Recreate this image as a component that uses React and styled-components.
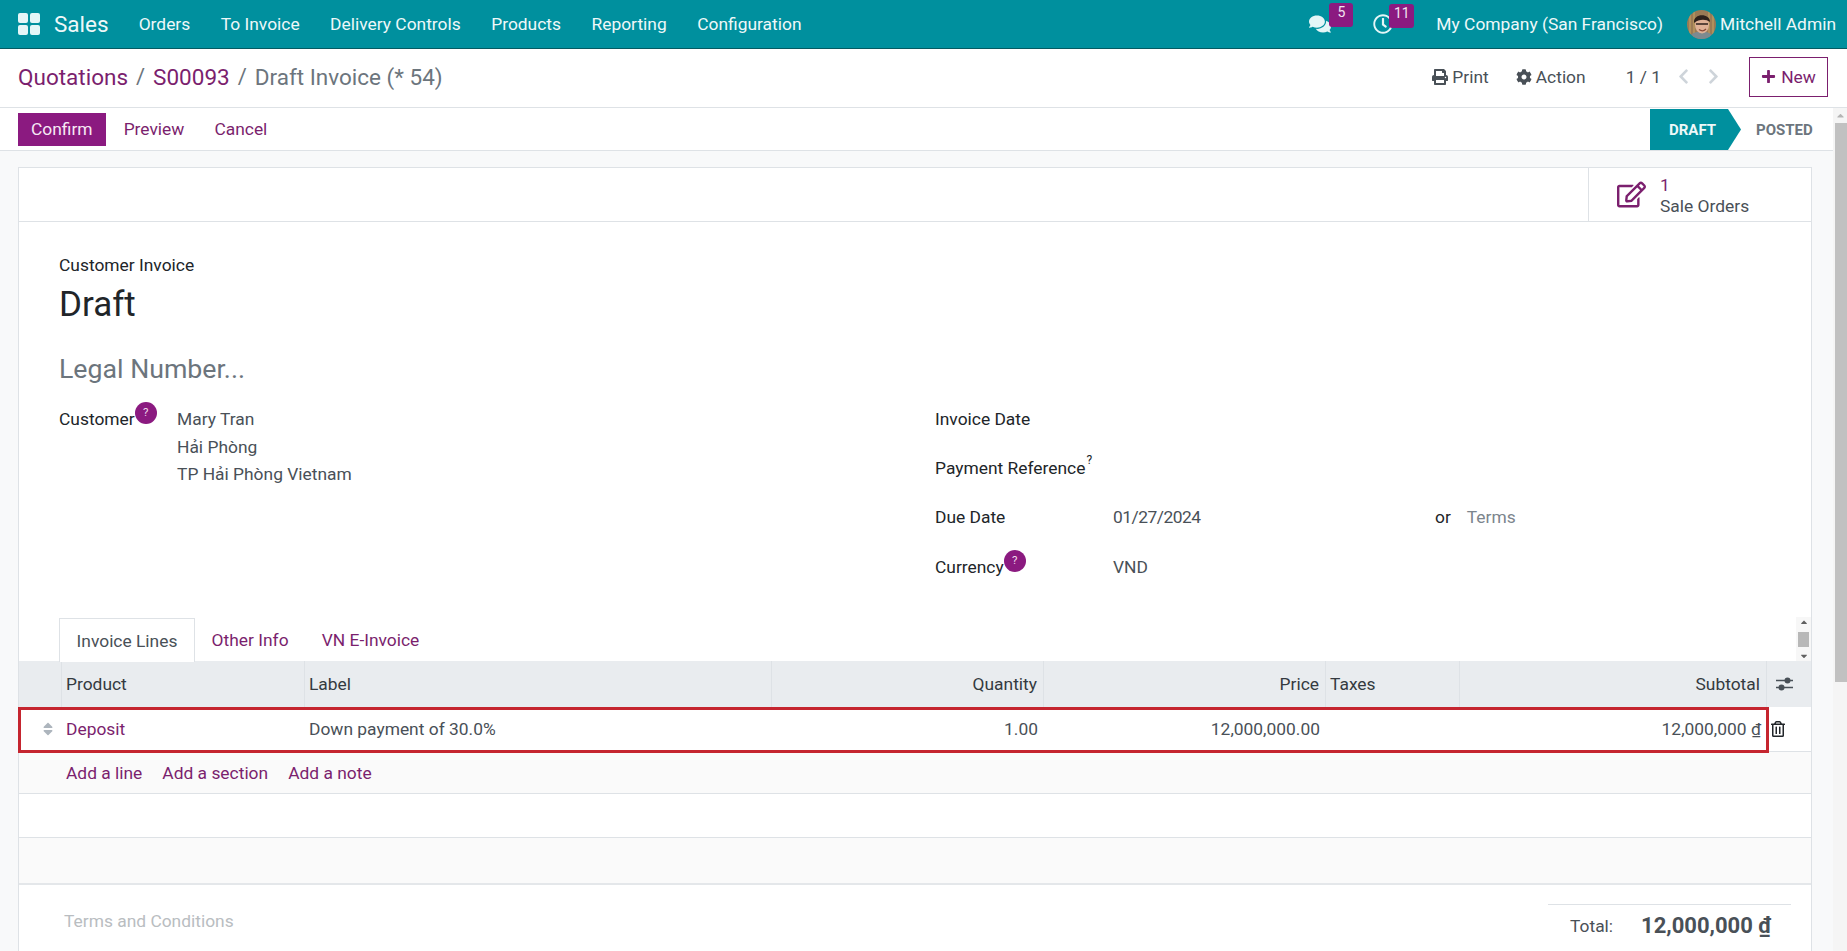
import React from 'react'
import styled, { createGlobalStyle } from 'styled-components'
import {
  FaComments,
  FaRegClock,
  FaPrint,
  FaCog,
  FaPlus,
  FaChevronLeft,
  FaChevronRight,
  FaRegEdit,
  FaRegTrashAlt,
  FaSort,
  FaCaretUp,
  FaCaretDown,
} from 'react-icons/fa'

const GlobalStyle = createGlobalStyle`
  * {
    box-sizing: border-box;
  }

  html,
  body {
    margin: 0;
    padding: 0;
    width: 100%;
    height: 100%;
    overflow: hidden;
    font-family: Roboto, 'Noto Sans', sans-serif;
    font-size: 17.4px;
    color: #212529;
    background: #ffffff;
  }
`

const purple = '#7b1f6e'
const button = '#8b1a80'
const columns = '43px 243px 467px 272px 282px 134px 307px 46px'

const Page = styled.div`
  width: 1847px;
  height: 951px;
  display: flex;
  flex-direction: column;
  overflow: hidden;
`

const Topbar = styled.header`
  height: 49px;
  flex-shrink: 0;
  display: flex;
  align-items: center;
  padding: 0 11px 0 18px;
  background: #00909e;
  border-bottom: 1px solid #055a62;
  color: #eef8f9;
`

const AppGrid = styled.span`
  display: grid;
  grid-template-columns: 10px 10px;
  grid-auto-rows: 10px;
  gap: 2px;
  margin-right: 14px;

  i {
    display: block;
    border-radius: 2px;
    background: #e4f6f7;
  }
`

const Brand = styled.span`
  font-size: 22.5px;
  margin-right: 30px;
`

const NavItem = styled.span`
  margin-right: 30.5px;
`

const Spacer = styled.span`
  flex: 1;
`

const Systray = styled.span`
  position: relative;
  display: flex;
  align-items: center;
  width: ${props => props.$width}px;
  font-size: ${props => props.$size}px;
  color: #e4f6f7;
`

const Badge = styled.span`
  position: absolute;
  left: ${props => props.$left}px;
  top: -10px;
  min-width: ${props => props.$wide}px;
  height: 24px;
  padding: 0 4px;
  border-radius: 3px;
  background: ${button};
  color: #f2e3f0;
  font-size: 14px;
  line-height: 18px;
  text-align: center;
`

const Company = styled.span`
  margin-right: 24px;
`

const Avatar = styled.svg`
  width: 29px;
  height: 29px;
  margin-right: 4px;
  border-radius: 50%;
`

const ControlPanel = styled.div`
  height: 59px;
  flex-shrink: 0;
  display: flex;
  align-items: center;
  padding: 0 19px 3px 18px;
  border-bottom: 1px solid #dee2e6;
  background: #ffffff;
`

const Crumb = styled.span`
  font-size: 22.5px;
  color: ${props => (props.$current ? '#6c757d' : purple)};
`

const CrumbSep = styled.span`
  font-size: 22px;
  color: #6c757d;
  margin: 0 8px;
`

const PanelAction = styled.span`
  display: inline-flex;
  align-items: center;
  gap: 4px;
  color: #495057;
  margin-right: ${props => props.$gap}px;

  svg {
    font-size: 16px;
  }
`

const Pager = styled.span`
  color: #495057;
  margin-right: 14px;
`

const PagerArrow = styled.span`
  display: inline-flex;
  color: #ced4da;
  font-size: 17px;
  margin-right: ${props => props.$gap}px;
`

const NewButton = styled.span`
  display: inline-flex;
  align-items: center;
  gap: 5px;
  height: 40px;
  width: 79px;
  justify-content: center;
  border: 1px solid ${purple};
  color: ${purple};

  svg {
    font-size: 15px;
  }
`

const Body = styled.div`
  flex: 1;
  display: flex;
  min-height: 0;
`

const Main = styled.div`
  flex: 1;
  min-width: 0;
  display: flex;
  flex-direction: column;
  background: #f8f9fa;
`

const ScrollTrack = styled.div`
  position: relative;
  width: 14px;
  flex-shrink: 0;
  background: #f5f5f5;
  padding-top: 15px;

  svg {
    position: absolute;
    top: 2px;
    left: 2px;
    font-size: 11px;
    color: #b5b5b5;
  }
`

const ScrollThumb = styled.div`
  width: 12px;
  margin-left: 2px;
  height: 559px;
  background: #c1c1c1;
`

const StatusBar = styled.div`
  height: 43px;
  flex-shrink: 0;
  display: flex;
  align-items: flex-start;
  justify-content: space-between;
  padding: 5px 0 0 18px;
  background: #ffffff;
  border-bottom: 1px solid #dee2e6;
`

const ActionButtons = styled.div`
  display: flex;
  align-items: center;
`

const ActionButton = styled.span`
  height: 33px;
  display: flex;
  align-items: center;
  padding: 0 ${props => (props.$primary ? 13 : 15)}px 2px;
  margin-right: ${props => (props.$primary ? 3 : 0)}px;
  background: ${props => (props.$primary ? button : 'transparent')};
  color: ${props => (props.$primary ? '#f6e9f4' : purple)};
`

const Stages = styled.div`
  display: flex;
  margin-top: -4px;
`

const StageActive = styled.span`
  width: 91px;
  height: 41px;
  display: flex;
  align-items: center;
  padding-left: 19px;
  background: #00909e;
  color: #eef8f9;
  font-size: 15px;
  font-weight: 700;
  clip-path: polygon(0 0, 78px 0, 100% 50%, 78px 100%, 0 100%);
`

const StageNext = styled.span`
  width: 92px;
  height: 41px;
  display: flex;
  align-items: center;
  padding-left: 15px;
  color: #6c757d;
  font-size: 15px;
  font-weight: 700;
`

const Content = styled.div`
  flex: 1;
  min-height: 0;
  padding: 16px 21px 0 18px;
`

const Sheet = styled.div`
  position: relative;
  height: 100%;
  background: #ffffff;
  border: 1px solid #dee2e6;
  border-bottom: 0;
  display: flex;
  flex-direction: column;
`

const ButtonBox = styled.div`
  height: 54px;
  flex-shrink: 0;
  display: flex;
  justify-content: flex-end;
  border-bottom: 1px solid #dee2e6;
`

const StatButton = styled.div`
  width: 223px;
  display: flex;
  align-items: center;
  gap: 14px;
  padding-left: 28px;
  border-left: 1px solid #dee2e6;
  color: ${purple};

  svg {
    font-size: 29px;
  }
`

const StatText = styled.div`
  display: flex;
  flex-direction: column;
  line-height: 20.5px;
  margin-top: 2px;

  span + span {
    color: #495057;
  }
`

const FormTop = styled.div`
  padding: 31px 40px 0 40px;
  height: 395px;
  flex-shrink: 0;
`

const DocType = styled.div`
  height: 24px;
  line-height: 24px;
  color: #212529;
`

const DocTitle = styled.h1`
  margin: 5px 0 0;
  font-size: 35px;
  line-height: 46px;
  font-weight: 400;
  color: #212529;
`

const LegalNumber = styled.div`
  margin-top: 23px;
  font-size: 26.700px;
  line-height: 36px;
  color: #6c757d;
`

const FormGroups = styled.div`
  margin-top: 20px;
  display: grid;
  grid-template-columns: 876px 1fr;
`

const LeftGroup = styled.div`
  display: grid;
  grid-template-columns: 118px 1fr;
`

const RightGroup = styled.div`
  display: grid;
  grid-template-columns: 178px 322px 1fr;
  grid-auto-rows: 49.200px;
  line-height: 24px;
`

const FieldLabel = styled.span`
  position: relative;
  height: 24px;
  line-height: 24px;
  white-space: nowrap;
  color: #212529;
`

const HelpBubble = styled.span`
  position: absolute;
  top: -5px;
  width: 22px;
  height: 22px;
  border-radius: 50%;
  background: ${button};
  color: #f0dcec;
  font-size: 11.500px;
  line-height: 21px;
  text-align: center;
`

const Sup = styled.sup`
  position: absolute;
  top: -4px;
  font-size: 12px;
  line-height: 16px;
  margin-left: 1px;
`

const Address = styled.div`
  display: flex;
  flex-direction: column;
  color: #495057;

  span {
    height: 27.500px;
    line-height: 24px;
  }
`

const FieldValue = styled.span`
  height: 24px;
  color: ${props => (props.$muted ? '#7c858d' : '#495057')};
`

const DateValue = styled(FieldValue)`
  letter-spacing: -0.5px;
`

const TermsCell = styled.span`
  display: flex;
  gap: 16px;
`

const TabsRow = styled.div`
  height: 44px;
  flex-shrink: 0;
  display: flex;
  align-items: flex-end;
  padding-left: 40px;
  position: relative;
`

const Tab = styled.span`
  height: ${props => (props.$active ? 44 : 43)}px;
  display: flex;
  align-items: center;
  padding: 0 16.600px;
  margin-bottom: ${props => (props.$active ? -1 : 0)}px;
  color: ${props => (props.$active ? '#495057' : purple)};
  background: #ffffff;
  border: ${props => (props.$active ? '1px solid #dee2e6' : '0')};
  border-bottom: 0;
  z-index: 1;
`

const MiniScroll = styled.div`
  position: absolute;
  top: 0;
  right: 0;
  width: 15px;
  height: 44px;
  display: flex;
  flex-direction: column;
  align-items: center;
  justify-content: space-between;
  background: #f7f7f7;
  font-size: 10px;
  color: #606060;

  i {
    display: block;
    width: 11px;
    height: 15px;
    background: #b8b8b8;
  }
`

const TableRow = styled.div`
  height: ${props => props.$height || 44}px;
  flex-shrink: 0;
  display: grid;
  grid-template-columns: ${columns};
  align-items: center;
  background: ${props => props.$tint || '#ffffff'};
  border-bottom: ${props => props.$line || '1px solid #dee2e6'};
`

const HeadRow = styled(TableRow)`
  align-items: stretch;
  background: #e9ecef;
  border-bottom: 0;
`

const HeadCell = styled.span`
  display: flex;
  align-items: center;
  justify-content: ${props => (props.$right ? 'flex-end' : 'flex-start')};
  padding: 0 ${props => (props.$right ? 6 : 5)}px 0 4px;
  border-right: 1px solid #dee2e6;
  color: #343a40;

  &:last-child {
    border-right: 0;
    padding-left: 9px;
  }
`

const Cell = styled.span`
  padding: 0 ${props => (props.$right ? 6 : 5)}px 0 4px;
  text-align: ${props => (props.$right ? 'right' : 'left')};
  color: ${props => (props.$link ? purple : '#495057')};
`

const Handle = styled.span`
  display: flex;
  justify-content: flex-end;
  padding-right: 6px;
  color: #adb5bd;
  font-size: 16px;
`

const Trash = styled.span`
  display: flex;
  padding-left: 3px;
  color: #212529;
  font-size: 16px;
`

const AddLinks = styled.div`
  grid-column: 2 / -1;
  display: flex;
  gap: 20px;
  padding-left: 4px;
  color: ${purple};
`

const Highlight = styled.div`
  position: absolute;
  left: -1px;
  top: 539px;
  width: 1751px;
  height: 46px;
  border: 3px solid #c5252f;
  pointer-events: none;
  z-index: 2;
`

const Footer = styled.div`
  flex: 1;
  display: flex;
  justify-content: space-between;
  align-items: flex-start;
  border-top: 2px solid #e4e7ea;
  padding: 19px 20px 0 45px;
`

const TermsNote = styled.span`
  margin-top: 7px;
  color: #b9bdc1;
`

const Totals = styled.div`
  width: 243px;
  display: flex;
  align-items: center;
  padding: 8px 0 0 22px;
  border-top: 1px solid #dee2e6;
  color: #495057;
`

const TotalAmount = styled.span`
  margin-left: 28px;
  font-size: 22px;
  font-weight: 700;
`

const SlidersIcon = () => (
  <svg width="17" height="14" viewBox="0 0 17 14">
    <path d="M0 3.500 H17 M0 10.500 H17" stroke="#495057" strokeWidth="1.600" />
    <circle cx="11.500" cy="3.500" r="3" fill="#495057" />
    <circle cx="5.500" cy="10.500" r="3" fill="#495057" />
  </svg>
)

const App = () => (
  <Page>
    <GlobalStyle />
    <Topbar>
      <AppGrid>
        <i />
        <i />
        <i />
        <i />
      </AppGrid>
      <Brand>Sales</Brand>
      <NavItem>Orders</NavItem>
      <NavItem>To Invoice</NavItem>
      <NavItem>Delivery Controls</NavItem>
      <NavItem>Products</NavItem>
      <NavItem>Reporting</NavItem>
      <NavItem>Configuration</NavItem>
      <Spacer />
      <Systray $width={64} $size={22}>
        <FaComments />
        <Badge $left={20} $wide={24}>5</Badge>
      </Systray>
      <Systray $width={63} $size={20}>
        <FaRegClock />
        <Badge $left={16} $wide={25}>11</Badge>
      </Systray>
      <Company>My Company (San Francisco)</Company>
      <Avatar viewBox="0 0 29 29">
        <rect width="29" height="29" fill="#9a7a55" />
        <path d="M3 0 V29 M7 0 V29 M22 0 V29 M26 0 V29" stroke="#b9995f" strokeWidth="1.500" />
        <path d="M2 29 C4 22 9 22 14 22 C20 22 25 22 27 29 Z" fill="#7d8a90" />
        <ellipse cx="15" cy="15" rx="7" ry="8.500" fill="#e0b296" />
        <path d="M7 13 C6 3 23 3 23 12 C19 9 12 9 7 13 Z" fill="#2e211b" />
        <path d="M9 14 H21" stroke="#2e211b" strokeWidth="1.500" />
        <path d="M12 19.500 C14 21 17 21 19 19" stroke="#8b4b3a" strokeWidth="1.200" fill="none" />
      </Avatar>
      <span>Mitchell Admin</span>
    </Topbar>
    <ControlPanel>
      <Crumb>Quotations</Crumb>
      <CrumbSep>/</CrumbSep>
      <Crumb>S00093</Crumb>
      <CrumbSep>/</CrumbSep>
      <Crumb $current>Draft Invoice (* 54)</Crumb>
      <Spacer />
      <PanelAction $gap={27}>
        <FaPrint />
        Print
      </PanelAction>
      <PanelAction $gap={40}>
        <FaCog />
        Action
      </PanelAction>
      <Pager>1 / 1</Pager>
      <PagerArrow $gap={13}>
        <FaChevronLeft />
      </PagerArrow>
      <PagerArrow $gap={27}>
        <FaChevronRight />
      </PagerArrow>
      <NewButton>
        <FaPlus />
        New
      </NewButton>
    </ControlPanel>
    <Body>
      <Main>
        <StatusBar>
          <ActionButtons>
            <ActionButton $primary>Confirm</ActionButton>
            <ActionButton>Preview</ActionButton>
            <ActionButton>Cancel</ActionButton>
          </ActionButtons>
          <Stages>
            <StageActive>DRAFT</StageActive>
            <StageNext>POSTED</StageNext>
          </Stages>
        </StatusBar>
        <Content>
          <Sheet>
            <ButtonBox>
              <StatButton>
                <FaRegEdit />
                <StatText>
                  <span>1</span>
                  <span>Sale Orders</span>
                </StatText>
              </StatButton>
            </ButtonBox>
            <FormTop>
              <DocType>Customer Invoice</DocType>
              <DocTitle>Draft</DocTitle>
              <LegalNumber>Legal Number...</LegalNumber>
              <FormGroups>
                <LeftGroup>
                  <FieldLabel>
                    Customer
                    <HelpBubble>?</HelpBubble>
                  </FieldLabel>
                  <Address>
                    <span>Mary Tran</span>
                    <span>Hải Phòng</span>
                    <span>TP Hải Phòng Vietnam</span>
                  </Address>
                </LeftGroup>
                <RightGroup>
                  <FieldLabel>Invoice Date</FieldLabel>
                  <span />
                  <span />
                  <FieldLabel>
                    Payment Reference
                    <Sup>?</Sup>
                  </FieldLabel>
                  <span />
                  <span />
                  <FieldLabel>Due Date</FieldLabel>
                  <DateValue>01/27/2024</DateValue>
                  <TermsCell>
                    or
                    <FieldValue $muted>Terms</FieldValue>
                  </TermsCell>
                  <FieldLabel>
                    Currency
                    <HelpBubble>?</HelpBubble>
                  </FieldLabel>
                  <FieldValue>VND</FieldValue>
                  <span />
                </RightGroup>
              </FormGroups>
            </FormTop>
            <TabsRow>
              <Tab $active>Invoice Lines</Tab>
              <Tab>Other Info</Tab>
              <Tab>VN E-Invoice</Tab>
              <MiniScroll>
                <FaCaretUp />
                <i />
                <FaCaretDown />
              </MiniScroll>
            </TabsRow>
            <HeadRow $height={46}>
              <HeadCell />
              <HeadCell>Product</HeadCell>
              <HeadCell>Label</HeadCell>
              <HeadCell $right>Quantity</HeadCell>
              <HeadCell $right>Price</HeadCell>
              <HeadCell>Taxes</HeadCell>
              <HeadCell $right>Subtotal</HeadCell>
              <HeadCell>
                <SlidersIcon />
              </HeadCell>
            </HeadRow>
            <TableRow $height={45}>
              <Handle>
                <FaSort />
              </Handle>
              <Cell $link>Deposit</Cell>
              <Cell>Down payment of 30.0%</Cell>
              <Cell $right>1.00</Cell>
              <Cell $right>12,000,000.00</Cell>
              <Cell />
              <Cell $right>12,000,000 ₫</Cell>
              <Trash>
                <FaRegTrashAlt />
              </Trash>
            </TableRow>
            <TableRow $height={42} $tint="#fafafa">
              <AddLinks>
                <span>Add a line</span>
                <span>Add a section</span>
                <span>Add a note</span>
              </AddLinks>
            </TableRow>
            <TableRow $height={44} />
            <TableRow $height={45} $tint="#fafafa" $line="0" />
            <Footer>
              <TermsNote>Terms and Conditions</TermsNote>
              <Totals>
                Total:
                <TotalAmount>12,000,000 ₫</TotalAmount>
              </Totals>
            </Footer>
            <Highlight />
          </Sheet>
        </Content>
      </Main>
      <ScrollTrack>
        <FaCaretUp />
        <ScrollThumb />
      </ScrollTrack>
    </Body>
  </Page>
)

export default App
